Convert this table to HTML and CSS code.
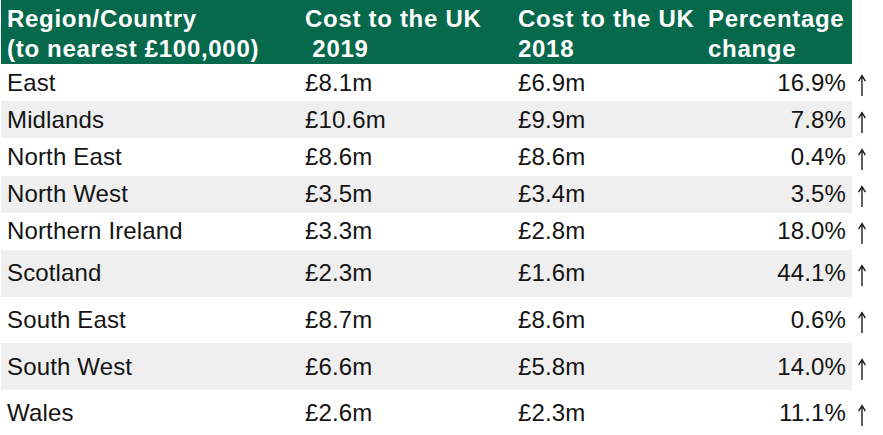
FILE: index.html
```html
<!DOCTYPE html>
<html lang="en">
<head>
<meta charset="utf-8">
<title>Cost to the UK by region</title>
<link rel="stylesheet" href="styles.css">
</head>
<body>
<div class="table">
  <div class="row head">
    <div class="cells">
      <div class="cell">Region/Country<br>(to nearest £100,000)</div>
      <div class="cell">Cost to the UK<br>&nbsp;2019</div>
      <div class="cell">Cost to the UK<br>2018</div>
      <div class="cell">Percentage<br>change</div>
    </div>
    <div class="arrow"></div>
  </div>
  <div class="row short">
    <div class="cells"><div class="cell">East</div><div class="cell">£8.1m</div><div class="cell">£6.9m</div><div class="cell num">16.9%</div></div>
    <div class="arrow"><svg class="up" viewBox="0 0 10 23" aria-label="up"><path d="M5 22V2M1.6 7.2L5 1.6l3.4 5.6"/></svg></div>
  </div>
  <div class="row short alt">
    <div class="cells"><div class="cell">Midlands</div><div class="cell">£10.6m</div><div class="cell">£9.9m</div><div class="cell num">7.8%</div></div>
    <div class="arrow"><svg class="up" viewBox="0 0 10 23" aria-label="up"><path d="M5 22V2M1.6 7.2L5 1.6l3.4 5.6"/></svg></div>
  </div>
  <div class="row short">
    <div class="cells"><div class="cell">North East</div><div class="cell">£8.6m</div><div class="cell">£8.6m</div><div class="cell num">0.4%</div></div>
    <div class="arrow"><svg class="up" viewBox="0 0 10 23" aria-label="up"><path d="M5 22V2M1.6 7.2L5 1.6l3.4 5.6"/></svg></div>
  </div>
  <div class="row short alt">
    <div class="cells"><div class="cell">North West</div><div class="cell">£3.5m</div><div class="cell">£3.4m</div><div class="cell num">3.5%</div></div>
    <div class="arrow"><svg class="up" viewBox="0 0 10 23" aria-label="up"><path d="M5 22V2M1.6 7.2L5 1.6l3.4 5.6"/></svg></div>
  </div>
  <div class="row short">
    <div class="cells"><div class="cell">Northern Ireland</div><div class="cell">£3.3m</div><div class="cell">£2.8m</div><div class="cell num">18.0%</div></div>
    <div class="arrow"><svg class="up" viewBox="0 0 10 23" aria-label="up"><path d="M5 22V2M1.6 7.2L5 1.6l3.4 5.6"/></svg></div>
  </div>
  <div class="row tall alt">
    <div class="cells"><div class="cell">Scotland</div><div class="cell">£2.3m</div><div class="cell">£1.6m</div><div class="cell num">44.1%</div></div>
    <div class="arrow"><svg class="up" viewBox="0 0 10 23" aria-label="up"><path d="M5 22V2M1.6 7.2L5 1.6l3.4 5.6"/></svg></div>
  </div>
  <div class="row tall">
    <div class="cells"><div class="cell">South East</div><div class="cell">£8.7m</div><div class="cell">£8.6m</div><div class="cell num">0.6%</div></div>
    <div class="arrow"><svg class="up" viewBox="0 0 10 23" aria-label="up"><path d="M5 22V2M1.6 7.2L5 1.6l3.4 5.6"/></svg></div>
  </div>
  <div class="row tall alt">
    <div class="cells"><div class="cell">South West</div><div class="cell">£6.6m</div><div class="cell">£5.8m</div><div class="cell num">14.0%</div></div>
    <div class="arrow"><svg class="up" viewBox="0 0 10 23" aria-label="up"><path d="M5 22V2M1.6 7.2L5 1.6l3.4 5.6"/></svg></div>
  </div>
  <div class="row tall">
    <div class="cells"><div class="cell">Wales</div><div class="cell">£2.6m</div><div class="cell">£2.3m</div><div class="cell num">11.1%</div></div>
    <div class="arrow"><svg class="up" viewBox="0 0 10 23" aria-label="up"><path d="M5 22V2M1.6 7.2L5 1.6l3.4 5.6"/></svg></div>
  </div>
</div>
</body>
</html>
```
FILE: styles.css
```css
html, body {
  margin: 0;
  padding: 0;
  background: #ffffff;
}
body {
  font-family: "Liberation Sans", Arial, sans-serif;
  color: #141414;
  width: 883px;
  overflow: hidden;
}
.table {
  display: flex;
  flex-direction: column;
}
.row {
  display: flex;
  align-items: stretch;
}
.cells {
  display: grid;
  grid-template-columns: 298px 213px 190px 150px;
  width: 851px;
  margin-left: 1px;
  align-items: center;
}
.cell {
  padding-left: 6px;
  font-size: 24px;
  line-height: 26px;
  letter-spacing: 0.15px;
  white-space: nowrap;
}
.cell.num {
  text-align: right;
  padding-right: 6px;
  padding-left: 0;
}
.arrow {
  flex: 1;
  display: flex;
  align-items: center;
  padding-left: 5px;
}
.up {
  width: 10px;
  height: 23px;
  margin-top: 5px;
  fill: none;
  stroke: #1e1e1e;
  stroke-width: 1.4;
}
.short { height: 37.2px; }
.tall { height: 46.67px; }
.alt .cells { background: #efefef; }
.head { height: 64px; }
.head .cells {
  background: #07694c;
  align-items: start;
  padding-top: 4px;
}
.head .cell {
  color: #ffffff;
  font-weight: bold;
  line-height: 30px;
  letter-spacing: 0.7px;
}
```
